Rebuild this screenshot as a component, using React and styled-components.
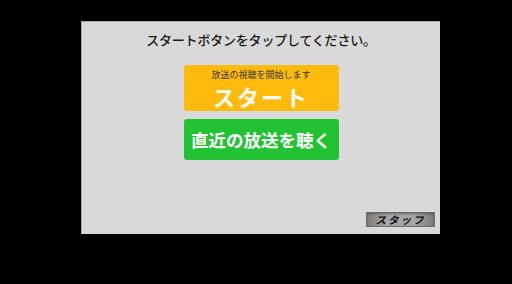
import React from "react";
import styled, { createGlobalStyle } from "styled-components";

const GlobalStyle = createGlobalStyle`
  html, body {
    margin: 0;
    padding: 0;
    background: #000;
  }
  body {
    font-family: "Noto Sans CJK JP", "Noto Sans", sans-serif;
  }
`;

const Screen = styled.div`
  width: 512px;
  height: 284px;
  background: #000;
  padding: 21px 0 0 81px;
  box-sizing: border-box;
`;

const Panel = styled.div`
  width: 359px;
  height: 213px;
  box-sizing: border-box;
  background: #d9d9d9;
  border-top: 1px solid #a8a8a8;
  border-left: 1px solid #a8a8a8;
  display: flex;
  flex-direction: column;
  align-items: center;
  padding: 9px 0 7px 0;
`;

const Title = styled.h1`
  margin: 0;
  font-size: 13px;
  line-height: 18px;
  font-weight: 500;
  color: #1a1a1a;
  letter-spacing: -0.2px;
`;

const Actions = styled.div`
  display: flex;
  flex-direction: column;
  gap: 8px;
  margin-top: 16px;
`;

const ActionButton = styled.button`
  width: 155px;
  height: ${(p) => p.$height}px;
  box-sizing: border-box;
  border: none;
  border-radius: 3px;
  background: ${(p) => p.$color};
  color: #fff;
  display: flex;
  flex-direction: column;
  align-items: center;
  justify-content: ${(p) => (p.$stacked ? "flex-start" : "center")};
  padding: ${(p) => (p.$stacked ? "3px 0 0" : "0")};
  font-family: inherit;
  cursor: pointer;
`;

const Caption = styled.span`
  font-size: 9px;
  line-height: 13px;
  color: #333;
`;

const BigLabel = styled.span`
  font-size: 22px;
  line-height: 30px;
  font-weight: 700;
  letter-spacing: 2px;
`;

const GreenLabel = styled.span`
  font-size: 17.5px;
  line-height: 26px;
  font-weight: 700;
`;

const StaffButton = styled.button`
  margin-top: auto;
  margin-right: 5px;
  align-self: flex-end;
  width: 69px;
  height: 15px;
  padding: 0;
  border: 1px solid #6e6e6e;
  background: linear-gradient(
    to right,
    #7c7c7c 0%,
    #a6a6a6 30%,
    #a6a6a6 70%,
    #7c7c7c 100%
  );
  box-shadow: inset 0 1px 2px rgba(0, 0, 0, 0.35);
  font-family: inherit;
  font-size: 10.5px;
  line-height: 13px;
  font-weight: 700;
  font-style: italic;
  color: #111;
  letter-spacing: 2px;
`;

export default function App() {
  return (
    <>
      <GlobalStyle />
      <Screen>
        <Panel>
          <Title>スタートボタンをタップしてください。</Title>
          <Actions>
            <ActionButton $color="#ffbb0c" $height={46} $stacked>
              <Caption>放送の視聴を開始します</Caption>
              <BigLabel>スタート</BigLabel>
            </ActionButton>
            <ActionButton $color="#22c332" $height={41}>
              <GreenLabel>直近の放送を聴く</GreenLabel>
            </ActionButton>
          </Actions>
          <StaffButton>スタッフ</StaffButton>
        </Panel>
      </Screen>
    </>
  );
}
